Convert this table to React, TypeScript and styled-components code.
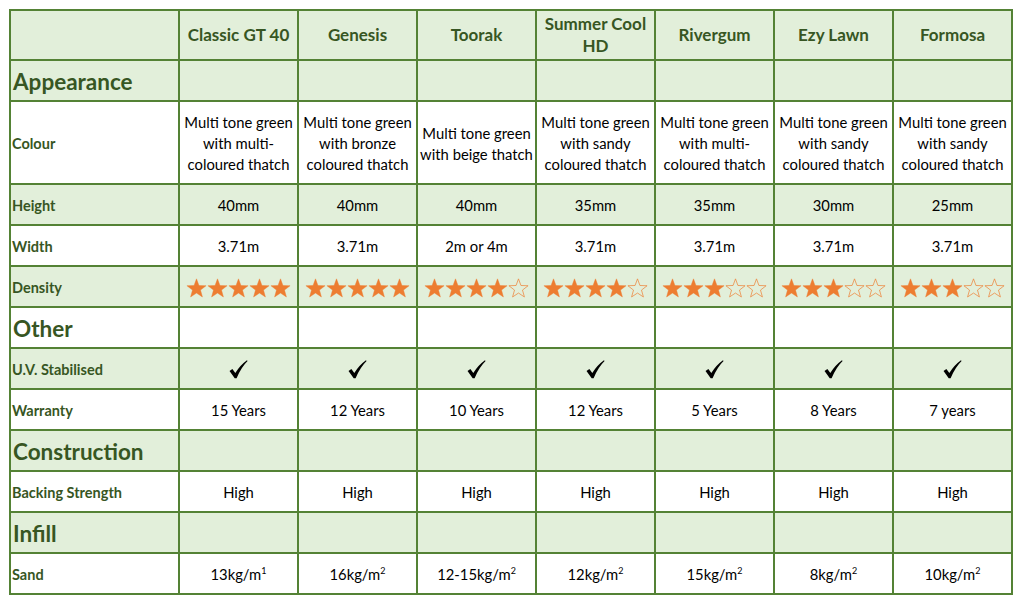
import { Fragment } from 'react';
import styled, { createGlobalStyle } from 'styled-components';

const GlobalStyle = createGlobalStyle`
  body {
    margin: 0;
    background: white;
    font-family: Lato, 'Open Sans', sans-serif;
  }
`;

const GREEN_BG = '#e2efda';
const BORDER = '#548235';
const DARK = '#375623';
const ORANGE = '#ed7d31';

const products = ['Classic GT 40', 'Genesis', 'Toorak', 'Summer Cool HD', 'Rivergum', 'Ezy Lawn', 'Formosa'];

type Row =
  | { kind: 'section'; title: string; shaded: boolean }
  | { kind: 'text'; label: string; values: string[]; shaded: boolean; tall?: boolean }
  | { kind: 'stars'; label: string; values: number[]; shaded: boolean }
  | { kind: 'check'; label: string; shaded: boolean }
  | { kind: 'sand'; label: string; values: [string, string][]; shaded: boolean };

const rows: Row[] = [
  { kind: 'section', title: 'Appearance', shaded: true },
  {
    kind: 'text',
    label: 'Colour',
    tall: true,
    shaded: false,
    values: [
      'Multi tone green with multi-coloured thatch',
      'Multi tone green with bronze coloured thatch',
      'Multi tone green with beige thatch',
      'Multi tone green with sandy coloured thatch',
      'Multi tone green with multi-coloured thatch',
      'Multi tone green with sandy coloured thatch',
      'Multi tone green with sandy coloured thatch',
    ],
  },
  { kind: 'text', label: 'Height', shaded: true, values: ['40mm', '40mm', '40mm', '35mm', '35mm', '30mm', '25mm'] },
  { kind: 'text', label: 'Width', shaded: false, values: ['3.71m', '3.71m', '2m or 4m', '3.71m', '3.71m', '3.71m', '3.71m'] },
  { kind: 'stars', label: 'Density', shaded: true, values: [5, 5, 4, 4, 3, 3, 3] },
  { kind: 'section', title: 'Other', shaded: false },
  { kind: 'check', label: 'U.V. Stabilised', shaded: true },
  {
    kind: 'text',
    label: 'Warranty',
    shaded: false,
    values: ['15 Years', '12 Years', '10 Years', '12 Years', '5 Years', '8 Years', '7 years'],
  },
  { kind: 'section', title: 'Construction', shaded: true },
  { kind: 'text', label: 'Backing Strength', shaded: false, values: Array(7).fill('High') },
  { kind: 'section', title: 'Infill', shaded: true },
  {
    kind: 'sand',
    label: 'Sand',
    shaded: false,
    values: [
      ['13kg/m', '1'],
      ['16kg/m', '2'],
      ['12-15kg/m', '2'],
      ['12kg/m', '2'],
      ['15kg/m', '2'],
      ['8kg/m', '2'],
      ['10kg/m', '2'],
    ],
  },
];

const Star = ({ filled }: { filled: boolean }) => (
  <svg width='21' height='20' viewBox='0 0 24 23'>
    <path
      d='M12 1 L14.8 8.6 L23 8.9 L16.6 13.9 L18.8 21.8 L12 17.3 L5.2 21.8 L7.4 13.9 L1 8.9 L9.2 8.6 Z'
      fill={filled ? ORANGE : 'none'}
      stroke={ORANGE}
      strokeWidth={filled ? 0.5 : 0.8}
      strokeLinejoin='miter'
    />
  </svg>
);

const Check = () => (
  <svg width='19' height='19' viewBox='0 0 18 18'>
    <path d='M0.5 10.5 L3.2 8.6 L6 12.4 Q10 5.5 17 0.3 L17.6 1 Q11.5 7 7.2 17.3 L5.4 17.3 Z' fill='#000' />
  </svg>
);

export default function App() {
  return (
    <Page>
      <GlobalStyle />
      <Table>
        <colgroup>
          <col style={{ width: 169 }} />
          {products.map((p) => (
            <col key={p} style={{ width: 119 }} />
          ))}
        </colgroup>
        <thead>
          <HeadRow>
            <HeadCell />
            {products.map((p) => (
              <HeadCell key={p}>{p}</HeadCell>
            ))}
          </HeadRow>
        </thead>
        <tbody>
          {rows.map((row, i) => {
            if (row.kind === 'section') {
              return (
                <BodyRow key={i} $shaded={row.shaded}>
                  <SectionCell>{row.title}</SectionCell>
                  {products.map((p) => (
                    <ValueCell key={p} />
                  ))}
                </BodyRow>
              );
            }
            return (
              <BodyRow key={i} $shaded={row.shaded} $tall={row.kind === 'text' && row.tall}>
                <LabelCell>{row.label}</LabelCell>
                {products.map((p, j) => (
                  <ValueCell key={p}>
                    {row.kind === 'text' && row.values[j]}
                    {row.kind === 'stars' && (
                      <Icons>
                        {[0, 1, 2, 3, 4].map((s) => (
                          <Star key={s} filled={s < row.values[j]} />
                        ))}
                      </Icons>
                    )}
                    {row.kind === 'check' && (
                      <Icons>
                        <Check />
                      </Icons>
                    )}
                    {row.kind === 'sand' && (
                      <Fragment>
                        {row.values[j][0]}
                        <Sup>{row.values[j][1]}</Sup>
                      </Fragment>
                    )}
                  </ValueCell>
                ))}
              </BodyRow>
            );
          })}
        </tbody>
      </Table>
    </Page>
  );
}

const Page = styled.div`
  padding: 9px;
`;

const Table = styled.table`
  border-collapse: collapse;
  table-layout: fixed;
  width: 1003px;
  border: 2px solid ${BORDER};

  td,
  th {
    border: 2px solid ${BORDER};
    padding: 0;
    vertical-align: middle;
  }

  td {
    padding-top: 2px;
  }
`;

const HeadRow = styled.tr`
  height: 50px;
  background: ${GREEN_BG};
`;

const HeadCell = styled.th`
  color: ${DARK};
  font-size: 17px;
  font-weight: 700;
  line-height: 22px;
  text-align: center;
`;

const BodyRow = styled.tr<{ $shaded: boolean; $tall?: boolean }>`
  height: ${({ $tall }) => ($tall ? 83 : 41)}px;
  background: ${({ $shaded }) => ($shaded ? GREEN_BG : 'white')};
`;

const SectionCell = styled.td`
  color: ${DARK};
  font-size: 22.5px;
  font-weight: 700;
  text-align: left;
  padding-left: 2px !important;
`;

const LabelCell = styled.td`
  color: ${DARK};
  font-size: 14.5px;
  font-weight: 700;
  text-align: left;
  padding-left: 1px !important;
`;

const ValueCell = styled.td`
  color: #000;
  font-size: 14.8px;
  line-height: 21px;
  text-align: center;
`;

const Icons = styled.div`
  display: flex;
  justify-content: center;
  align-items: center;
`;

const Sup = styled.sup`
  font-size: 9px;
  vertical-align: 6px;
  line-height: 0;
`;
